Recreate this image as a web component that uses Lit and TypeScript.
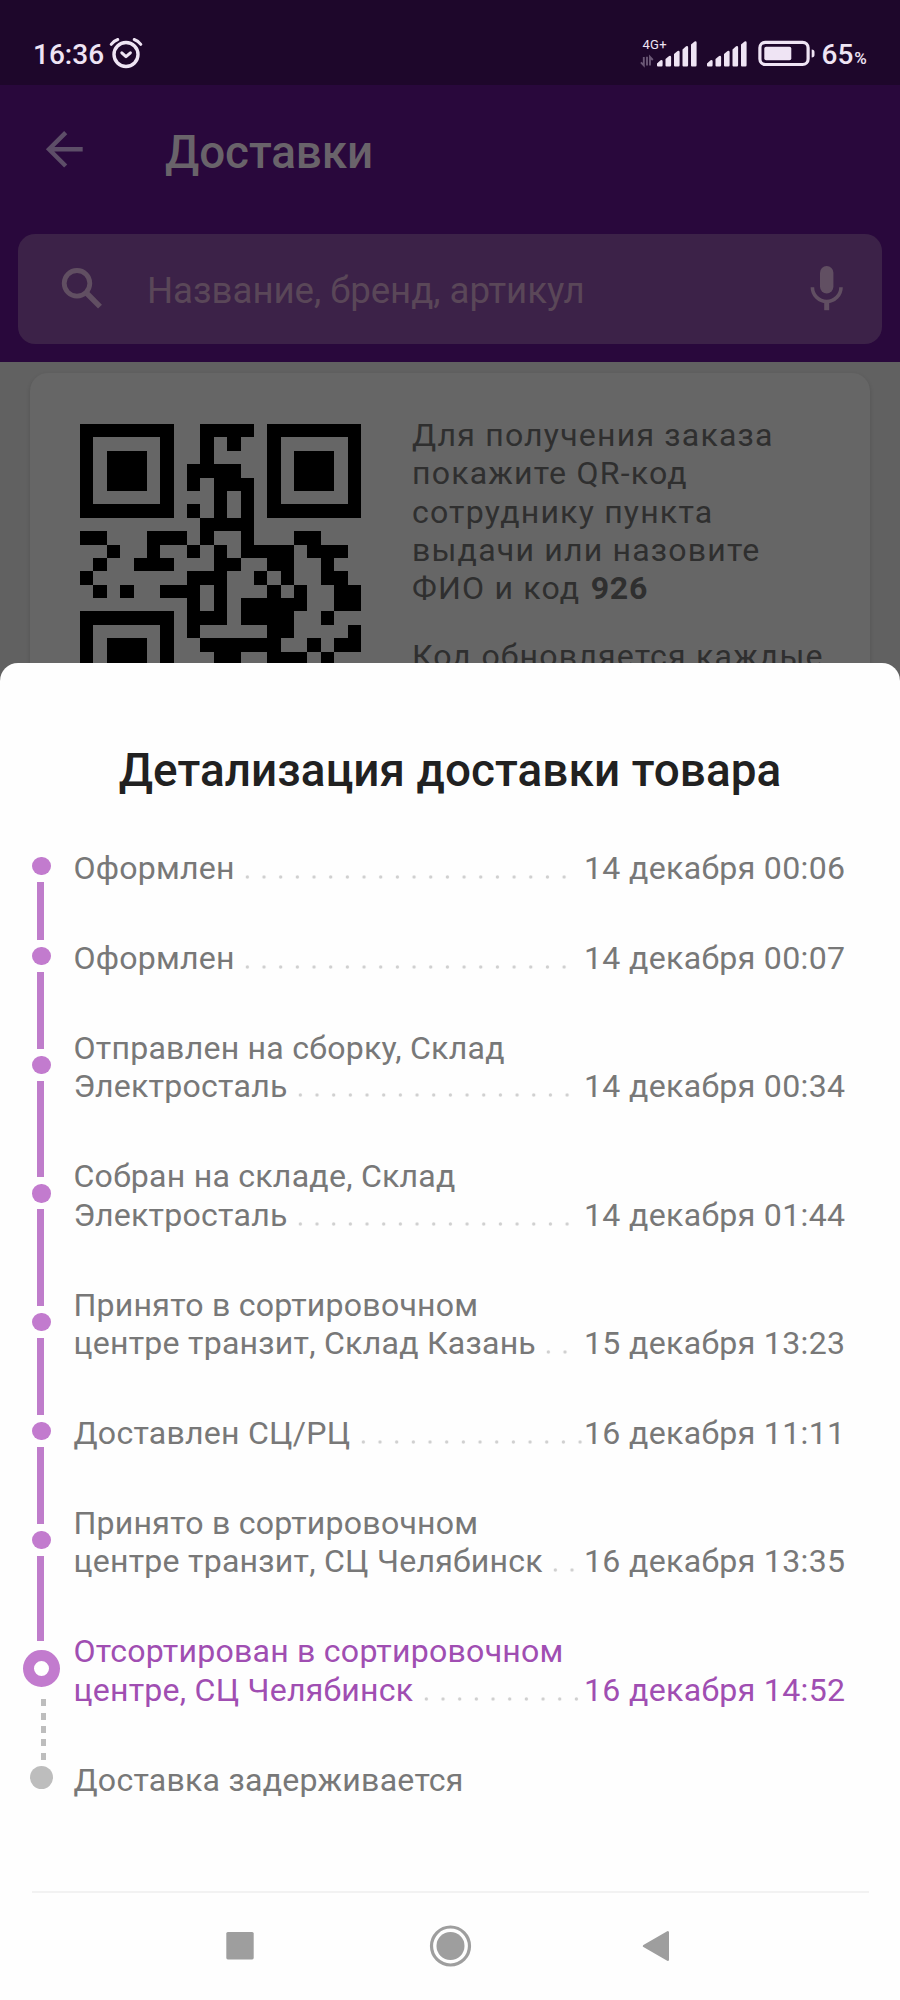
import { LitElement, html, css, svg, nothing } from "lit";
import { customElement, property } from "lit/decorators.js";
import { classMap } from "lit/directives/class-map.js";

type StepKind = "done" | "current" | "pending";

interface Step {
  lines: string[];
  date?: string;
  dots?: number;
  kind: StepKind;
}

const STEPS: Step[] = [
  { lines: ["Оформлен"], date: "14 декабря 00:06", dots: 20, kind: "done" },
  { lines: ["Оформлен"], date: "14 декабря 00:07", dots: 20, kind: "done" },
  { lines: ["Отправлен на сборку, Склад", "Электросталь"], date: "14 декабря 00:34", dots: 17, kind: "done" },
  { lines: ["Собран на складе, Склад", "Электросталь"], date: "14 декабря 01:44", dots: 17, kind: "done" },
  { lines: ["Принято в сортировочном", "центре транзит, Склад Казань"], date: "15 декабря 13:23", dots: 2, kind: "done" },
  { lines: ["Доставлен СЦ/РЦ"], date: "16 декабря 11:11", dots: 14, kind: "done" },
  { lines: ["Принято в сортировочном", "центре транзит, СЦ Челябинск"], date: "16 декабря 13:35", dots: 2, kind: "done" },
  { lines: ["Отсортирован в сортировочном", "центре, СЦ Челябинск"], date: "16 декабря 14:52", dots: 10, kind: "current" },
  { lines: ["Доставка задерживается"], kind: "pending" },
];

const LEADER_PITCH = 16.68;

const QR = [
  "#######..####.#######",
  "#.....#..#.#..#.....#",
  "#.###.#..#....#.###.#",
  "#.###.#.####..#.###.#",
  "#.###.#.#.###.#.###.#",
  "#.....#...#.#.#.....#",
  "#######.#.#.#.#######",
  ".........####........",
  "##...###.#..#...##...",
  "..#..#..#.#.####.###.",
  ".#..###...##..##..#..",
  "#.......###..#.#..##.",
  ".#.#..###.#...#.#..##",
  "........#.#.#####..##",
  "#######.###.####..#..",
  "#.....#.#.....##....#",
  "#.###.#..######..#.##",
  "#.###.#...##..###.#..",
];

@customElement("status-bar")
class StatusBar extends LitElement {
  static styles = css`
    :host {
      display: flex;
      justify-content: space-between;
      height: 85px;
      box-sizing: border-box;
      padding: 35px 0 0 33px;
      background: #1e072b;
      color: #efe4f4;
      font-weight: 500;
      font-size: 28px;
      line-height: 40px;
    }
    .group { display: flex; }
    .alarm { margin-left: 5px; }
    .right { width: 261px; }
    .percent { font-size: 17px; margin-left: 1px; }
    .level { margin-left: 5.5px; white-space: nowrap; }
    .network { font-size: 13px; font-weight: 400; letter-spacing: 0.3px; }
    svg { display: block; flex: none; }
  `;

  private bars(x: number) {
    const tops = [24.8, 20.5, 15.5, 10.8, 6];
    return tops.map((t, i) => {
      const l = x + i * 8.5;
      return svg`<path d="M${l} ${t + 3.6}L${l + 3.6} ${t + 0.4}Q${l + 5.6} ${t - 0.4} ${l + 5.6} ${t + 1.6}V30.2Q${l + 5.6} 31.6 ${l + 4.4} 31.6H${l + 1}Q${l} 31.6 ${l} 30.6Z"/>`;
    });
  }

  render() {
    return html`
      <div class="group">
        <span>16:36</span>
        <svg class="alarm" width="34" height="38" viewBox="0 0 34 38" fill="none" stroke="currentColor" stroke-linecap="round" stroke-linejoin="round">
          <circle cx="17" cy="19.5" r="12" stroke-width="3.4" />
          <path d="M12.8 17.8L17 21.7L21.4 17.8" stroke-width="3" />
          <path d="M2.2 9.3Q4.8 5.8 8.8 4.5M31.8 9.3Q29.2 5.8 25.2 4.5" stroke-width="3" />
        </svg>
      </div>
      <div class="group right">
        <svg width="177" height="38" viewBox="0 0 177 38" fill="currentColor">
          <text class="network" x="3.5" y="14">4G+</text>
          <path d="M4.8 22V30.4L1.9 27.4M8 21.8V30.6M11 30.4V22L13.8 25" fill="none" stroke="#6a5775" stroke-width="1.9" />
          ${this.bars(18)} ${this.bars(68)}
          <rect x="120.9" y="7.3" width="48.2" height="22.2" rx="5.5" fill="none" stroke="currentColor" stroke-width="3.2" />
          <rect x="125.3" y="11.7" width="27" height="13.6" rx="1.8" />
          <path d="M172.7 14.6Q175.5 14.8 175.5 17V20Q175.5 22.2 172.7 22.4Z" />
        </svg>
        <div class="level">65<span class="percent">%</span></div>
      </div>
    `;
  }
}

@customElement("deliveries-header")
class DeliveriesHeader extends LitElement {
  static styles = css`
    :host {
      display: block;
      height: 277px;
      box-sizing: border-box;
      padding: 0 18px;
      background: #29083c;
    }
    .bar { display: flex; height: 149px; }
    .back { margin: 44px 0 0 26px; }
    h1 {
      margin: 40px 0 0 81px;
      font-size: 45.83px;
      line-height: 54px;
      font-weight: 500;
      letter-spacing: -0.1px;
      color: #69636a;
    }
    .search {
      display: flex;
      align-items: center;
      height: 110px;
      border-radius: 17px;
      background: #3c2248;
      color: #614f62;
    }
    .lens { margin-left: 40px; }
    .hint {
      flex: 1;
      margin-left: 43px;
      padding-top: 3px;
      font-size: 36.67px;
      letter-spacing: -0.04px;
      color: #5a4758;
    }
    .mic { margin-right: 36px; }
  `;

  render() {
    return html`
      <div class="bar">
        <svg class="back" width="40" height="40" viewBox="0 0 40 40" fill="none" stroke="#5d4e68" stroke-width="4.4">
          <path d="M38.7 20.3H6M21.7 3.6L5 20.3L21.7 37" />
        </svg>
        <h1>Доставки</h1>
      </div>
      <div class="search">
        <svg class="lens" width="46" height="46" viewBox="0 0 46 46" fill="none" stroke="currentColor">
          <circle cx="19" cy="17.3" r="12.8" stroke-width="4.8" />
          <path d="M28.5 27L42 40.7" stroke-width="5.4" />
        </svg>
        <div class="hint">Название, бренд, артикул</div>
        <svg class="mic" width="38" height="50" viewBox="0 0 38 50">
          <rect x="12" y="2" width="13.4" height="27.4" rx="6.7" fill="currentColor" />
          <path d="M4.4 23.2A14.3 14.3 0 0 0 33 23.2" fill="none" stroke="currentColor" stroke-width="3.6" />
          <path d="M18.7 37V46.2" stroke="currentColor" stroke-width="5" />
        </svg>
      </div>
    `;
  }
}

@customElement("pickup-card")
class PickupCard extends LitElement {
  static styles = css`
    :host {
      display: block;
      box-sizing: border-box;
      height: 321px;
      padding: 11px 30px 0;
      background: #616161;
      overflow: hidden;
    }
    .card {
      display: flex;
      height: 400px;
      border-radius: 18px;
      background: #666;
      box-shadow: 0 2px 4px rgba(0, 0, 0, 0.15);
    }
    .code { flex: none; margin: 51px 0 0 50px; }
    .text {
      margin: 43px 0 0 51px;
      font-size: 32.08px;
      line-height: 38.33px;
      letter-spacing: 1.18px;
      color: #2f2f2f;
      white-space: nowrap;
    }
    p { margin: 0 0 29px; }
    b { font-weight: 700; letter-spacing: 0.8px; margin-left: 1.2px; }
  `;

  render() {
    const cells = QR.flatMap((row, y) =>
      [...row].map((c, x) => (c === "#" ? `M${x} ${y}h1v1h-1z` : "")),
    ).join("");
    return html`
      <div class="card">
        <svg class="code" width="281" height="241" viewBox="0 0 21 18" preserveAspectRatio="none" shape-rendering="crispEdges">
          <path d=${cells} fill="#000" />
        </svg>
        <div class="text">
          <p>Для получения заказа<br />покажите QR-код<br />сотруднику пункта<br />выдачи или назовите<br />ФИО и код <b>926</b></p>
          <p>Код обновляется каждые</p>
        </div>
      </div>
    `;
  }
}

@customElement("delivery-step")
class DeliveryStep extends LitElement {
  @property({ attribute: false }) step!: Step;
  @property({ type: Boolean }) first = false;
  @property({ attribute: false }) next?: StepKind;

  static styles = css`
    :host { display: block; }
    .row {
      display: grid;
      grid-template-columns: 37px 524px 1fr;
      padding-left: 23px;
      color: #787878;
      font-size: 32.08px;
      line-height: 38.33px;
      letter-spacing: 0.23px;
      white-space: nowrap;
    }
    .rail {
      display: flex;
      flex-direction: column;
      align-items: center;
    }
    .link {
      flex: 1 1 0;
      width: 7px;
      margin-right: 2px;
      background: #bf7dcb;
    }
    .link.none { background: none; }
    .link.dashed {
      width: 5px;
      margin: 0 0 0 4px;
      background: repeating-linear-gradient(to bottom, #bdbdbd 0 7px, transparent 7px 13.6px);
    }
    .link.dashed.up {
      background: repeating-linear-gradient(to top, #bdbdbd 0 7px, transparent 7px 13.6px);
    }
    .dot {
      flex: none;
      width: 18.4px;
      height: 18.4px;
      margin: 6.8px 0;
      border-radius: 50%;
      background: #c27bce;
    }
    .current .up { flex-basis: 3.4px; }
    .current .dot {
      box-sizing: border-box;
      width: 37px;
      height: 37px;
      margin: 9.3px 0 11.7px;
      border: 11.8px solid #c27bce;
      background: #fff;
    }
    .pending .dot {
      width: 23px;
      height: 23px;
      margin: 5.7px 0;
      background: #bdbdbd;
    }
    .label, .date { padding: 28.2px 0 23.47px; }
    .label { padding-left: 13.5px; }
    .date { align-self: end; letter-spacing: 0.33px; }
    .current { color: #a04eb2; }
    .leader {
      display: inline-block;
      height: 4px;
      margin-left: 4.4px;
      background: radial-gradient(circle at center, #d0d0d0 1.2px, transparent 2.1px) 0 0 / 16.68px 4px repeat-x;
    }
  `;

  render() {
    const { lines, date, dots, kind } = this.step;
    const leader = dots
      ? html`<span class="leader" style="width:${(dots * LEADER_PITCH).toFixed(2)}px"></span>`
      : nothing;
    return html`
      <div class="row ${kind}">
        <div class="rail">
          <div class=${classMap({ link: true, up: true, none: this.first, dashed: kind === "pending" })}></div>
          <div class="dot"></div>
          <div class=${classMap({ link: true, none: !this.next, dashed: this.next === "pending" })}></div>
        </div>
        <div class="label">${lines.map((l, i) => html`<div>${l}${i === lines.length - 1 ? leader : nothing}</div>`)}</div>
        <div class="date">${date ?? nothing}</div>
      </div>
    `;
  }
}

@customElement("app-root")
class AppRoot extends LitElement {
  static styles = css`
    :host {
      display: block;
      width: 900px;
      height: 2000px;
      overflow: hidden;
      font-family: Roboto, sans-serif;
      background: #fefefe;
    }
    .sheet {
      position: relative;
      display: flex;
      flex-direction: column;
      height: 1337px;
      box-sizing: border-box;
      margin-top: -20px;
      padding-top: 80px;
      border-radius: 18px 18px 0 0;
      background: #fefefe;
    }
    h2 {
      margin: 0;
      text-align: center;
      font-size: 45.83px;
      line-height: 54px;
      font-weight: 500;
      letter-spacing: 0.09px;
      color: #212121;
    }
    .steps { margin-top: 24px; }
    .divider {
      height: 2px;
      margin: 68px 31px 0 32px;
      background: #f2f2f2;
    }
    .nav { display: flex; gap: 162px; padding: 32px 0 0 219px; }
    .nav svg { display: block; }
  `;

  render() {
    return html`
      <status-bar></status-bar>
      <deliveries-header></deliveries-header>
      <pickup-card></pickup-card>
      <section class="sheet">
        <h2>Детализация доставки товара</h2>
        <div class="steps">
          ${STEPS.map(
            (s, i) => html`<delivery-step .step=${s} ?first=${i === 0} .next=${STEPS[i + 1]?.kind}></delivery-step>`,
          )}
        </div>
        <div class="divider"></div>
        <nav class="nav">
          <svg width="46" height="42" viewBox="0 0 46 42">
            <rect x="7.3" y="7" width="27.4" height="27.4" rx="1.6" fill="#9e9e9e" />
          </svg>
          <svg width="46" height="42" viewBox="0 0 46 42">
            <circle cx="23.5" cy="21" r="14" fill="#9e9e9e" />
            <circle cx="23.5" cy="21" r="19" fill="none" stroke="#9e9e9e" stroke-width="3.2" />
          </svg>
          <svg width="46" height="42" viewBox="0 0 46 42">
            <path d="M9 21L32.8 7.3V34.7Z" fill="#9e9e9e" stroke="#9e9e9e" stroke-width="2.4" stroke-linejoin="round" />
          </svg>
        </nav>
      </section>
    `;
  }
}
